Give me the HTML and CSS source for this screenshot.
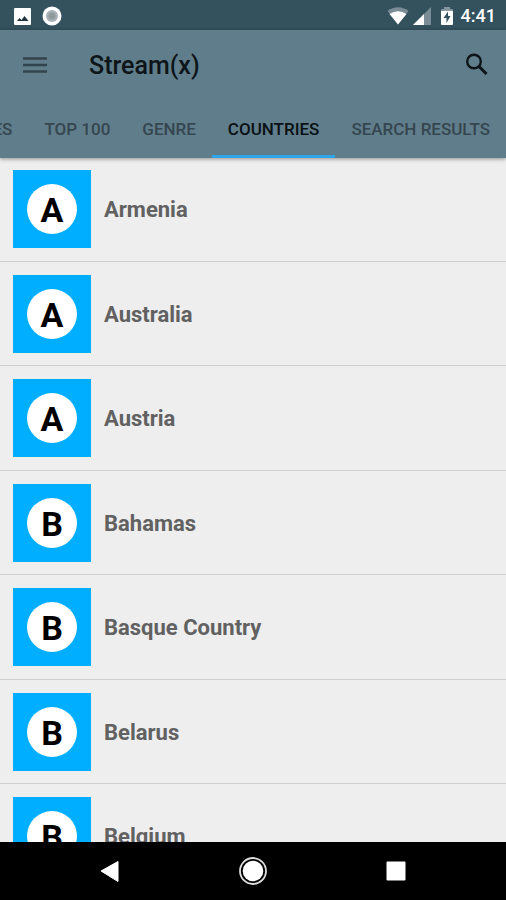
FILE: index.html
```html
<!DOCTYPE html>
<html lang="en">
<head>
<meta charset="utf-8">
<meta name="viewport" content="width=device-width, initial-scale=1">
<title>Stream(x)</title>
<link rel="stylesheet" href="styles.css">
</head>
<body>
<div class="status">
  <svg class="status-icon" width="18" height="18" viewBox="0 0 18 18" aria-hidden="true"><rect x="1" y="1" width="17" height="17" rx="1" fill="#fff"/><path d="M4 14l2.500-3 2 2 3-4 4 5z" fill="#20353f"/></svg>
  <svg class="status-icon" width="20" height="20" viewBox="0 0 20 20" aria-hidden="true"><circle cx="10" cy="10" r="9.500" fill="#fff"/><circle cx="10" cy="10" r="6" fill="#a9b1b5"/><circle cx="10" cy="10" r="3.500" fill="#8f9a9f"/></svg>
  <div class="status-right">
    <svg width="22" height="18" viewBox="0 0 22 18" aria-hidden="true"><path d="M0.500 4Q11-3.500 21.500 4L11 17.500z" fill="#fff" opacity=".35"/><path d="M2.500 7Q11 1.500 19.500 7L11 17.500z" fill="#fff"/></svg>
    <svg width="18" height="18" viewBox="0 0 18 18" aria-hidden="true"><path d="M18 0v18H0z" fill="#fff" opacity=".35"/><path d="M11 7v11H0z" fill="#fff"/></svg>
    <svg class="battery" width="12" height="18" viewBox="0 0 12 18" aria-hidden="true"><path d="M0 5V3q0-1 1-1h2V0h6v2h2q1 0 1 1v2z" fill="#fff" opacity=".4"/><path d="M0 4h12v13q0 1-1 1H1q-1 0-1-1z" fill="#fff"/><path d="M7 4.500L2.500 11H5.500V16L9.500 9H7z" fill="#34515e"/></svg>
    <span class="clock">4:41</span>
  </div>
</div>
<header class="header">
  <div class="toolbar">
    <button class="icon-button" aria-label="Menu"><svg width="24" height="18" viewBox="0 0 24 18"><path d="M0 2.500h24M0 9h24M0 15.500h24" stroke="#34444d" stroke-width="2.400"/></svg></button>
    <h1 class="title">Stream(x)</h1>
    <button class="icon-button" aria-label="Search"><svg width="24" height="24" viewBox="0 0 24 24"><circle cx="9" cy="8.500" r="6.800" fill="none" stroke="#0d1519" stroke-width="2.400"/><path d="M14 13.500l7.500 7.500" stroke="#0d1519" stroke-width="3"/></svg></button>
  </div>
  <nav class="tabs">
    <a class="tab" href="#">ES</a>
    <a class="tab" href="#">TOP 100</a>
    <a class="tab" href="#">GENRE</a>
    <a class="tab active" href="#" aria-current="page">COUNTRIES</a>
    <a class="tab" href="#">SEARCH RESULTS</a>
  </nav>
</header>
<main class="content">
  <ul class="list">
    <li class="row"><span class="tile"><span class="letter">A</span></span><span class="name">Armenia</span></li>
    <li class="row"><span class="tile"><span class="letter">A</span></span><span class="name">Australia</span></li>
    <li class="row"><span class="tile"><span class="letter">A</span></span><span class="name">Austria</span></li>
    <li class="row"><span class="tile"><span class="letter">B</span></span><span class="name">Bahamas</span></li>
    <li class="row"><span class="tile"><span class="letter">B</span></span><span class="name">Basque Country</span></li>
    <li class="row"><span class="tile"><span class="letter">B</span></span><span class="name">Belarus</span></li>
    <li class="row"><span class="tile"><span class="letter">B</span></span><span class="name">Belgium</span></li>
  </ul>
</main>
<footer class="navbar">
  <button class="nav-button" aria-label="Back"><svg width="28" height="28" viewBox="0 0 28 28"><path d="M5 14L22 4.500v20z" fill="#fff" stroke="#fff" stroke-linejoin="round"/></svg></button>
  <button class="nav-button" aria-label="Home"><svg width="28" height="28" viewBox="0 0 28 28"><circle cx="14" cy="14" r="13" fill="none" stroke="#ddd" stroke-width="1.800"/><circle cx="14" cy="14" r="10.300" fill="#fff"/></svg></button>
  <button class="nav-button" aria-label="Recent apps"><svg width="28" height="28" viewBox="0 0 28 28"><rect x="4.500" y="4.500" width="19" height="19" rx="1" fill="#fff"/></svg></button>
</footer>
</body>
</html>
```

FILE: styles.css
```css
* { box-sizing: border-box; }

body {
  margin: 0;
  height: 100vh;
  display: flex;
  flex-direction: column;
  overflow: hidden;
  background: #eeeeee;
  font-family: Roboto, "Liberation Sans", sans-serif;
}

svg { display: block; flex: none; }

button {
  padding: 0;
  border: 0;
  background: none;
}

.status {
  flex: none;
  display: flex;
  align-items: center;
  gap: 11px;
  height: 30px;
  padding: 2px 10px 0 13px;
  background: #34515e;
  color: #fff;
}

.status-right {
  margin-left: auto;
  display: flex;
  align-items: center;
  gap: 4px;
}

.battery { margin-left: 6px; }

.clock {
  margin-left: 4px;
  font-size: 18px;
  line-height: 20px;
  font-weight: 500;
}

.header {
  flex: none;
  position: relative;
  background: #607d8b;
  box-shadow: 0 1px 4px rgba(0, 0, 0, 0.4);
}

.toolbar {
  display: flex;
  align-items: center;
  height: 70px;
  padding: 0 17px 0 23px;
}

.title {
  flex: 1;
  margin: 0 0 0 42px;
  padding-top: 2px;
  font-size: 25px;
  line-height: 30px;
  font-weight: 500;
  color: #0d1519;
}

.tabs {
  display: flex;
  justify-content: flex-end;
  height: 58px;
  overflow: hidden;
}

.tab {
  flex: none;
  padding: 18px 16px 0;
  border-bottom: 3px solid transparent;
  font-size: 17px;
  line-height: 22px;
  font-weight: 500;
  color: #34464f;
  text-decoration: none;
  white-space: nowrap;
}

.tab.active {
  color: #0a1013;
  border-bottom-color: #2fa4e7;
}

.content {
  flex: 1;
  min-height: 0;
  overflow: hidden;
}

.list {
  margin: 0;
  padding: 0;
  list-style: none;
}

.row {
  display: flex;
  align-items: center;
  gap: 13px;
  padding: 13px;
  border-bottom: 1px solid #cfcfcf;
}

.row:first-child { padding-top: 12px; }

.row:nth-child(even) { padding-bottom: 12px; }

.tile {
  flex: none;
  display: grid;
  place-items: center;
  width: 78px;
  height: 78px;
  background: #00aeff;
}

.letter {
  width: 50px;
  height: 50px;
  border-radius: 50%;
  background: #fff;
  color: #000;
  font-size: 34px;
  line-height: 52px;
  font-weight: 700;
  text-align: center;
}

.name {
  padding-top: 2px;
  font-size: 22px;
  line-height: 28px;
  font-weight: 700;
  color: #616161;
}

.navbar {
  flex: none;
  display: flex;
  justify-content: center;
  gap: 115px;
  height: 58px;
  background: #000;
}
```
